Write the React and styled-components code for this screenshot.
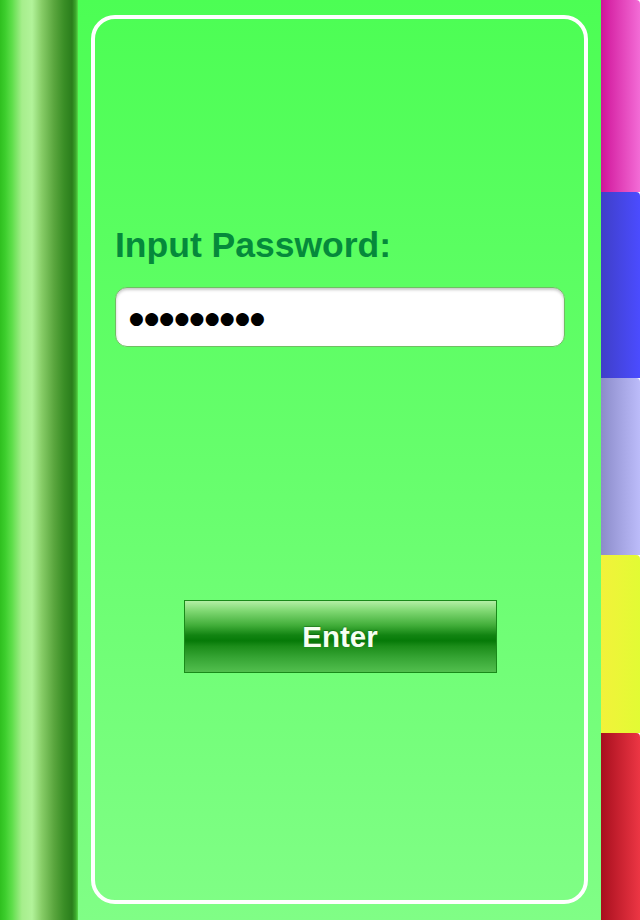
import styled, { createGlobalStyle } from "styled-components";

const Global = createGlobalStyle`
  html, body { margin: 0; padding: 0; }
  body { font-family: "Liberation Sans", Arial, sans-serif; }
`;

const tabs = [
  { h: 192, from: "#d0159a", to: "#f36cd6" },
  { h: 186, from: "#3f3fc8", to: "#4b4cff" },
  { h: 177, from: "#8c8cca", to: "#bcbcfa" },
  { h: 178, from: "#f2f23a", to: "#e2fb34" },
  { h: 187, from: "#a80f1e", to: "#ec3644" },
];

export default function App() {
  return (
    <>
      <Global />
      <Page>
        <Spine />
        <Main>
          <Card>
            <Label>Input Password:</Label>
            <Field>●●●●●●●●●</Field>
            <EnterButton>Enter</EnterButton>
          </Card>
        </Main>
        <TabStack>
          {tabs.map((t, i) => (
            <Tab key={i} $h={t.h} $from={t.from} $to={t.to} />
          ))}
        </TabStack>
      </Page>
    </>
  );
}

const Page = styled.div`
  width: 640px;
  height: 920px;
  display: flex;
  overflow: hidden;
`;

const Spine = styled.div`
  width: 78px;
  flex-shrink: 0;
  background: linear-gradient(
    to right,
    #2fbf1f 0px,
    #3ccd2c 5px,
    #5ede4a 12px,
    #a6ee8c 22px,
    #b2f39a 32px,
    #86cc66 42px,
    #5aa63e 54px,
    #3a8e26 64px,
    #2a7e1c 72px,
    #3eac2e 76px,
    #5add4c 78px
  );
`;

const Main = styled.div`
  flex: 1;
  padding: 15px 13px 16px 13px;
  background: linear-gradient(to bottom, #4cfe54 0%, #66fe6c 50%, #80fe86 100%);
  display: flex;
`;

const Card = styled.div`
  flex: 1;
  border: 4px solid #ffffff;
  border-radius: 24px;
  display: flex;
  flex-direction: column;
  padding: 206px 19px 0 20px;
`;

const Label = styled.div`
  font-size: 35.5px;
  line-height: 40px;
  font-weight: 700;
  color: #05893b;
`;

const Field = styled.div`
  margin-top: 22px;
  height: 60px;
  box-sizing: border-box;
  background: #ffffff;
  border: 1px solid #6fbf62;
  border-radius: 12px;
  box-shadow: inset 0 2px 3px rgba(0, 0, 0, 0.22);
  display: flex;
  align-items: center;
  padding: 2px 0 0 13px;
  font-family: "DejaVu Sans", sans-serif;
  font-size: 17px;
  letter-spacing: 0.3px;
  color: #000000;
`;

const EnterButton = styled.button`
  margin: 253px auto 0;
  width: 313px;
  height: 73px;
  border: 1px solid #1a8a1a;
  border-radius: 0;
  background: linear-gradient(
    to bottom,
    #b4efa6 0%,
    #7fd872 14%,
    #42ae3a 34%,
    #128412 48%,
    #067a08 56%,
    #1c8d1a 64%,
    #36a534 80%,
    #52bf4e 100%
  );
  color: #f6fff2;
  font-family: "Liberation Sans", Arial, sans-serif;
  font-size: 29.5px;
  font-weight: 700;
  text-shadow: 0 -1px 1px rgba(0, 60, 0, 0.35);
  cursor: pointer;
`;

const TabStack = styled.div`
  width: 39px;
  flex-shrink: 0;
  display: flex;
  flex-direction: column;
`;

const Tab = styled.div`
  height: ${(p) => p.$h}px;
  flex-shrink: 0;
  background: linear-gradient(to right, ${(p) => p.$from}, ${(p) => p.$to});
  border-top-right-radius: 4px;
`;
